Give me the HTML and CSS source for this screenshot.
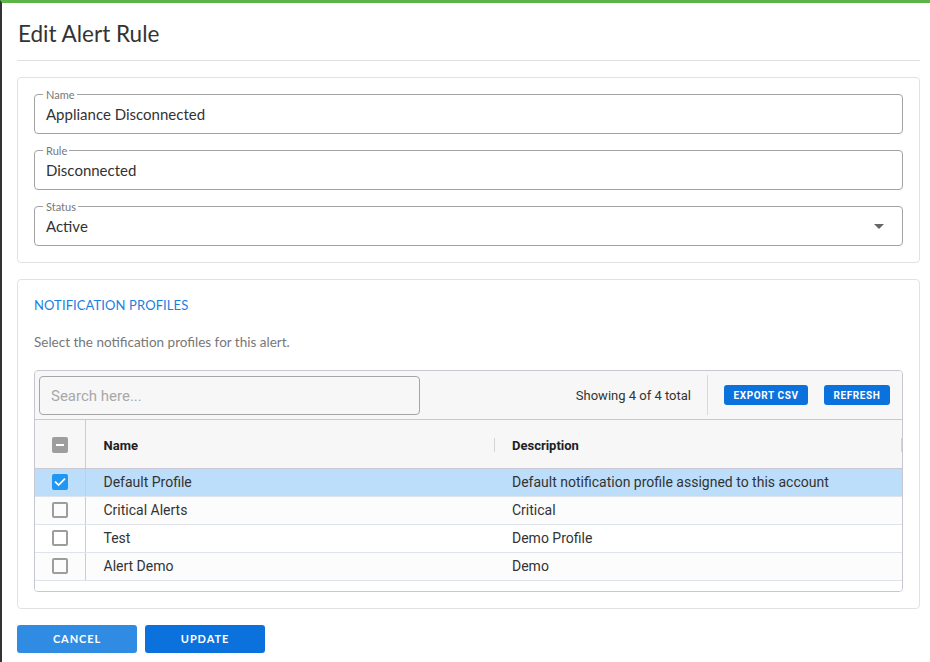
FILE: index.html
```html
<!DOCTYPE html>
<html lang="en">
<head>
<meta charset="utf-8">
<title>Edit Alert Rule</title>
<link rel="stylesheet" href="styles.css">
</head>
<body>
<div class="page">
  <h1 class="title">Edit Alert Rule</h1>

  <section class="card form-card">
    <div class="field">
      <span class="field-label">Name</span>
      <span class="field-value">Appliance Disconnected</span>
    </div>
    <div class="field">
      <span class="field-label">Rule</span>
      <span class="field-value">Disconnected</span>
    </div>
    <div class="field field-select">
      <span class="field-label">Status</span>
      <span class="field-value">Active</span>
      <span class="caret"></span>
    </div>
  </section>

  <section class="card profiles-card">
    <h2 class="section-title">NOTIFICATION PROFILES</h2>
    <p class="hint">Select the notification profiles for this alert.</p>

    <div class="grid">
      <div class="toolbar">
        <div class="search">Search here...</div>
        <span class="count">Showing 4 of 4 total</span>
        <span class="vsep"></span>
        <button class="tool-btn btn-export">EXPORT CSV</button>
        <button class="tool-btn btn-refresh">REFRESH</button>
      </div>
      <table class="table">
        <colgroup>
          <col class="col-check">
          <col class="col-name">
          <col class="col-desc">
        </colgroup>
        <thead>
          <tr>
            <th class="cell-check"><span class="cb cb-indeterminate"><span class="dash"></span></span></th>
            <th class="th-name"><div class="th-inner"><span>Name</span><span class="th-sep"></span></div></th>
            <th class="th-desc"><div class="th-inner"><span>Description</span><span class="th-sep"></span></div></th>
          </tr>
        </thead>
        <tbody>
          <tr class="selected">
            <td class="cell-check"><span class="cb cb-checked"><svg viewBox="0 0 16 16" width="16" height="16"><path d="M3.6 8.2 L6.6 11.1 L12.4 5.2" fill="none" stroke="#fff" stroke-width="1.7" stroke-linecap="square"/></svg></span></td>
            <td class="td-name">Default Profile</td>
            <td class="td-desc">Default notification profile assigned to this account</td>
          </tr>
          <tr class="alt">
            <td class="cell-check"><span class="cb"></span></td>
            <td class="td-name">Critical Alerts</td>
            <td class="td-desc">Critical</td>
          </tr>
          <tr>
            <td class="cell-check"><span class="cb"></span></td>
            <td class="td-name">Test</td>
            <td class="td-desc">Demo Profile</td>
          </tr>
          <tr class="alt">
            <td class="cell-check"><span class="cb"></span></td>
            <td class="td-name">Alert Demo</td>
            <td class="td-desc">Demo</td>
          </tr>
        </tbody>
      </table>
      <div class="grid-tail"></div>
    </div>
  </section>

  <div class="actions">
    <button class="action-btn btn-cancel">CANCEL</button>
    <button class="action-btn btn-update">UPDATE</button>
  </div>
</div>
</body>
</html>
```
FILE: styles.css
```css
* { box-sizing: border-box; }

html, body { height: 100%; }

body {
  margin: 0;
  border-top: 3px solid #5db548;
  border-left: 2px solid #333;
  background: #fff;
  font-family: Lato, "Open Sans", sans-serif;
  color: #333;
}

.page {
  padding: 0 10px 0 15px;
}

.title {
  margin: 16px 0 0;
  padding: 0 0 11px 1px;
  font-size: 22.5px;
  line-height: 30px;
  font-weight: 400;
  color: #333;
  border-bottom: 1px solid #e0e0e0;
}

.card {
  margin-top: 16px;
  border: 1px solid #e2e2e2;
  border-radius: 4px;
  background: #fff;
}

.form-card {
  padding: 16px;
  display: flex;
  flex-direction: column;
  gap: 16px;
}

.field {
  position: relative;
  height: 40px;
  border: 1px solid #a2a2a2;
  border-radius: 4px;
  padding: 0 18px 0 11px;
  display: flex;
  align-items: center;
}

.field-label {
  position: absolute;
  top: -7px;
  left: 8px;
  padding: 0 2px 0 3px;
  background: #fff;
  font-size: 11px;
  line-height: 14px;
  color: #777;
}

.field-value {
  font-size: 15px;
  line-height: 20px;
  color: #333;
}

.caret {
  margin-left: auto;
  width: 0;
  height: 0;
  border-left: 5px solid transparent;
  border-right: 5px solid transparent;
  border-top: 5px solid #666;
}

.profiles-card {
  padding: 16px 16px 16px;
}

.section-title {
  margin: 0;
  font-size: 13px;
  line-height: 18px;
  font-weight: 400;
  color: #1a80de;
  letter-spacing: 0.1px;
}

.hint {
  margin: 19px 0 0;
  font-size: 13.5px;
  line-height: 18px;
  color: #777;
}

.grid {
  margin-top: 19px;
  border: 1px solid #c6c7d0;
  border-radius: 4px;
  overflow: hidden;
  font-family: Roboto, "Open Sans", sans-serif;
}

.toolbar {
  height: 49px;
  padding: 0 12px 0 4px;
  display: flex;
  align-items: center;
  background: #f7f7f7;
  border-bottom: 1px solid #c8c9d2;
}

.search {
  width: 381px;
  height: 39px;
  margin-top: 1px;
  border: 1px solid #a5a5a5;
  border-radius: 4px;
  padding: 0 11px;
  display: flex;
  align-items: center;
  font-size: 15px;
  color: #a8a8a8;
}

.count {
  margin-left: auto;
  margin-right: 16px;
  font-size: 13px;
  color: #333;
}

.vsep {
  width: 1px;
  height: 40px;
  background: #d9d9d9;
  margin-right: 16px;
}

.tool-btn {
  height: 20px;
  border: 0;
  border-radius: 3px;
  background: #0a71dd;
  color: #fff;
  font-family: Roboto, sans-serif;
  font-size: 10px;
  font-weight: 700;
  letter-spacing: 0.6px;
  padding: 0;
  display: flex;
  align-items: center;
  justify-content: center;
}

.btn-export { width: 84px; margin-right: 16px; }
.btn-refresh { width: 66px; }

.table {
  width: 100%;
  border-collapse: collapse;
  table-layout: fixed;
}

.col-check { width: 50px; }
.col-name { width: 410px; }

.table th {
  height: 48px;
  padding: 0;
  background: #f7f7f7;
  border-bottom: 1px solid #c8c9d2;
  text-align: left;
  font-size: 13px;
  font-weight: 700;
  color: #222;
}

.th-inner {
  display: flex;
  align-items: center;
  justify-content: space-between;
  padding-top: 3px;
}

.th-name .th-inner { padding-left: 18px; }
.th-desc .th-inner { padding-left: 17px; }

.th-sep {
  width: 1px;
  height: 14px;
  background: #d4d4d4;
}

.table td {
  height: 28px;
  padding: 0;
  border-bottom: 1px solid #dfe3ec;
  font-size: 14px;
  color: #333;
  white-space: nowrap;
}

.table .cell-check {
  text-align: center;
  border-right: 1px solid #c8ccd6;
  line-height: 0;
}

.table th.cell-check { padding-top: 3px; }

.td-name { padding-left: 18px !important; }
.td-desc { padding-left: 17px !important; }

.table tr.alt td { background: #fcfcfc; }
.table tr.selected td { background: #bcdefa; }

.cb {
  display: inline-block;
  width: 16px;
  height: 16px;
  border: 2px solid #9d9d9d;
  border-radius: 2px;
  vertical-align: middle;
  position: relative;
  margin-left: 1px;
}

.cb-checked {
  border: 0;
  background: #2196f3;
}

.cb-checked svg { display: block; }

.cb-indeterminate {
  border: 0;
  background: #9e9e9e;
  display: inline-flex;
  align-items: center;
  justify-content: center;
}

.dash {
  width: 8px;
  height: 2px;
  background: #fff;
}

.grid-tail {
  height: 10px;
  background: #fff;
}

.actions {
  margin-top: 16px;
  display: flex;
  gap: 8px;
}

.action-btn {
  width: 120px;
  height: 28px;
  border: 0;
  border-radius: 3px;
  color: #fff;
  font-family: Lato, sans-serif;
  font-size: 11px;
  font-weight: 700;
  letter-spacing: 0.9px;
  padding: 0;
}

.btn-cancel { background: #2f8ce2; }
.btn-update { background: #0a71dd; }
```
